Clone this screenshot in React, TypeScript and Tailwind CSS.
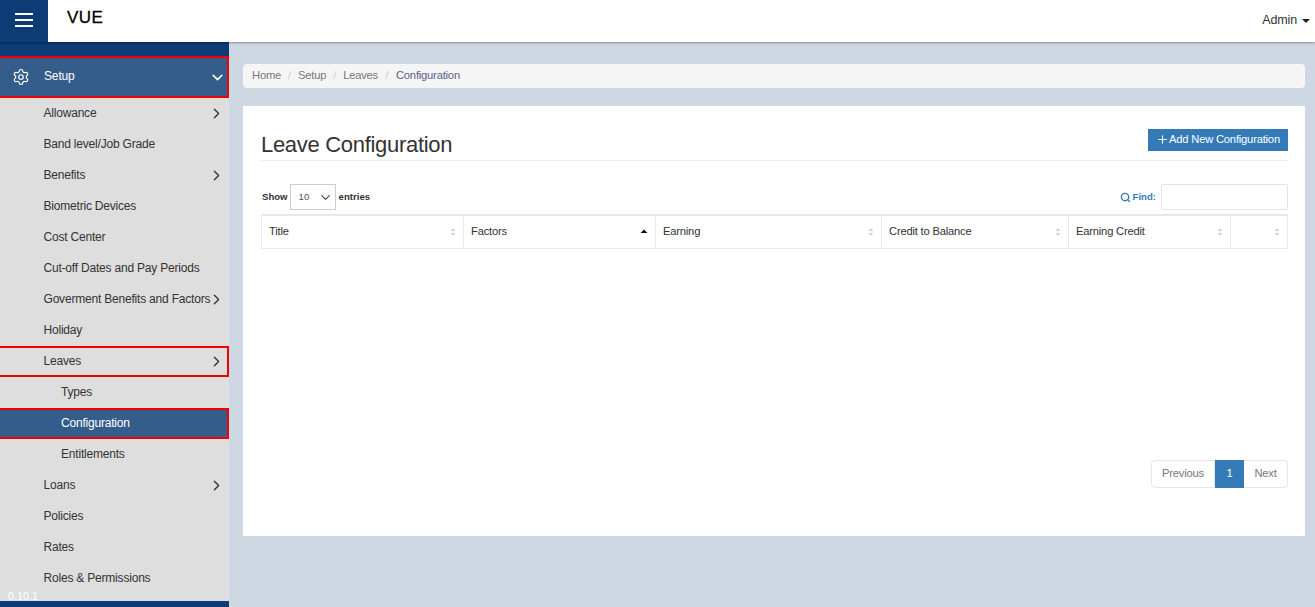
import React from "react";
import { ChevronRight, ChevronDown, Settings, Search, Plus } from "lucide-react";

const font = { fontFamily: '"Liberation Sans", Arial, sans-serif' };

type Item = { label: string; arrow?: boolean; sub?: boolean; outlined?: boolean; active?: boolean };

const items: Item[] = [
  { label: "Allowance", arrow: true },
  { label: "Band level/Job Grade" },
  { label: "Benefits", arrow: true },
  { label: "Biometric Devices" },
  { label: "Cost Center" },
  { label: "Cut-off Dates and Pay Periods" },
  { label: "Goverment Benefits and Factors", arrow: true },
  { label: "Holiday" },
  { label: "Leaves", arrow: true, outlined: true },
  { label: "Types", sub: true },
  { label: "Configuration", sub: true, active: true },
  { label: "Entitlements", sub: true },
  { label: "Loans", arrow: true },
  { label: "Policies" },
  { label: "Rates" },
  { label: "Roles & Permissions" },
];

function SidebarRow({ item }: { item: Item }) {
  const cls = item.active
    ? "bg-[#345d8b] text-white border-y-2 border-r-2 border-[#f00000]"
    : item.outlined
      ? "text-[#333] border-y-2 border-r-2 border-[#f00000]"
      : "text-[#333]";
  return (
    <div className={`h-[31px] flex items-center text-[12px] tracking-[-0.2px] shrink-0 ${cls}`}>
      <span className={`${item.sub ? "pl-[61px]" : "pl-[43.5px]"} flex-1 min-w-0 whitespace-nowrap mt-[-1px]`}>{item.label}</span>
      {item.arrow && <ChevronRight size={17} strokeWidth={1.9} className={`shrink-0 text-[#333] ${item.outlined ? "mr-[2px]" : "mr-[4px]"}`} />}
    </div>
  );
}

function SortIcon({ active }: { active?: boolean }) {
  return active ? (
    <svg width="8" height="10" viewBox="0 0 8 10" className="shrink-0">
      <path d="M4 2.5 L7.5 6 H0.5 Z" fill="#111" />
    </svg>
  ) : (
    <svg width="6" height="8" viewBox="0 0 6 8" className="shrink-0">
      <path d="M3 0 L5.5 3 H0.5 Z M3 8 L0.5 5 H5.5 Z" fill="#d4d4d4" />
    </svg>
  );
}

const columns = [
  { label: "Title", w: "w-[202px]" },
  { label: "Factors", w: "w-[192px]", active: true },
  { label: "Earning", w: "w-[226px]" },
  { label: "Credit to Balance", w: "w-[187px]" },
  { label: "Earning Credit", w: "w-[162px]" },
  { label: "", w: "flex-1" },
];

export default function App() {
  return (
    <div className="relative h-[607px] w-[1315px] overflow-hidden bg-[#cdd8e3] flex flex-col" style={font}>
      <header className="h-[42px] shrink-0 bg-white flex items-center shadow-[0_1px_2px_rgba(0,0,0,0.35)] relative z-10">
        <div className="w-[48px] h-full bg-[#0c3b75] flex items-center justify-center">
          <svg width="20" height="16" viewBox="0 0 20 16" className="mt-[-2px]">
            <path d="M1 2 H19 M1 8 H19 M1 14 H19" stroke="#fff" strokeWidth="2" />
          </svg>
        </div>
        <div className="ml-[19px] text-[17px] text-black font-normal tracking-[0.4px] mb-[6px] [-webkit-text-stroke:0.3px_black]">VUE</div>
        <div className="ml-auto mr-[5px] flex items-center gap-[5px] text-[12.5px] tracking-[-0.15px] text-[#333] mt-[-1px]">
          <span>Admin</span>
          <svg width="8" height="4" viewBox="0 0 8 4"><path d="M0 0 H8 L4 4 Z" fill="#222" /></svg>
        </div>
      </header>

      <div className="flex flex-1 min-h-0">
        <aside className="w-[229px] shrink-0 bg-[#dedede] flex flex-col overflow-hidden">
          <div className="h-[14px] shrink-0 bg-[#0c3b75]" />
          <div className="h-[42px] shrink-0 bg-[#345d8b] border-y-2 border-r-2 border-[#f00000] flex items-center text-white text-[12px] tracking-[-0.15px]">
            <Settings size={18} strokeWidth={1.6} className="ml-[12px]" />
            <span className="ml-[14px] flex-1 mt-[-2px]">Setup</span>
            <ChevronDown size={17} strokeWidth={2.2} className="mr-[1px]" />
          </div>
          <div className="flex flex-col flex-1 min-h-0">
            {items.map((it) => (
              <SidebarRow key={it.label} item={it} />
            ))}
          </div>
          <div className="h-[6px] shrink-0 bg-[#0c3b75]" />
        </aside>

        <main className="flex-1 min-w-0 pl-[14px] pr-[10px] pt-[22px]">
          <div className="h-[24px] bg-[#f5f5f5] rounded-[4px] flex items-center pl-[9px] pb-[1px] text-[11.2px] tracking-[-0.2px] text-[#777]">
            <span>Home</span>
            <span className="mx-[7px] text-[#ccc]">/</span>
            <span>Setup</span>
            <span className="mx-[7px] text-[#ccc]">/</span>
            <span>Leaves</span>
            <span className="mx-[7.5px] text-[#ccc]">/</span>
            <span className="text-[#5a5f8a]">Configuration</span>
          </div>

          <section className="mt-[18px] h-[430px] bg-white pl-[18px] pr-[17px] flex flex-col">
            <div className="h-[55px] border-b border-[#eee] flex justify-between shrink-0">
              <h1 className="text-[22px] tracking-[-0.3px] leading-[24px] text-[#333] mt-[27px] font-normal">Leave Configuration</h1>
              <button className="h-[22px] mt-[23px] w-[140px] bg-[#337ab7] text-white text-[11.2px] tracking-[-0.2px] flex items-center justify-center pb-[1px]">
                <Plus size={13} strokeWidth={2} />
                <span>Add New Configuration</span>
              </button>
            </div>

            <div className="mt-[23px] h-[26px] flex items-center justify-between text-[9.6px] font-bold text-[#333] shrink-0">
              <div className="flex items-center">
                <span className="ml-[1px]">Show</span>
                <div className="ml-[2px] w-[46px] h-[26px] border border-[#ccc] flex items-center justify-between pl-[8px] pr-[2px] font-normal text-[#555]">
                  <span>10</span>
                  <ChevronDown size={15} strokeWidth={1.8} className="text-[#444]" />
                </div>
                <span className="ml-[3px]">entries</span>
              </div>
              <div className="flex items-center">
                <Search size={11} strokeWidth={3} className="text-[#337ab7] mr-[2px]" />
                <span className="text-[#337ab7]">Find:</span>
                <div className="ml-[5px] w-[127px] h-[26px] border border-[#e4e4e4] rounded-[2px]" />
              </div>
            </div>

            <div className="mt-[4px] h-[35px] flex border-x border-t-2 border-b border-[#e8e8e8] shrink-0">
              {columns.map((c, i) => (
                <div
                  key={i}
                  className={`${c.w} flex items-center justify-between pl-[7px] text-[11.2px] tracking-[-0.2px] text-[#333] ${i < 5 ? "border-r border-[#e8e8e8]" : ""}`}
                >
                  <span className="mt-[-1px]">{c.label}</span>
                  <span className="mr-[7px]"><SortIcon active={c.active} /></span>
                </div>
              ))}
            </div>

            <div className="flex justify-end mt-[211px] shrink-0">
              <div className="flex h-[28px] text-[11.2px] tracking-[-0.2px] text-[#777]">
                <div className="w-[64px] border border-[#e6e6e6] rounded-l-[4px] flex items-center justify-center pb-[1px]">Previous</div>
                <div className="w-[29px] bg-[#337ab7] text-white flex items-center justify-center pb-[1px]">1</div>
                <div className="w-[44px] border border-l-0 border-[#e6e6e6] rounded-r-[4px] flex items-center justify-center pb-[1px]">Next</div>
              </div>
            </div>
          </section>
        </main>
      </div>

      <div className="absolute left-[8px] top-[589px] text-[10.8px] leading-[14px] text-white">0.10.1</div>
    </div>
  );
}
